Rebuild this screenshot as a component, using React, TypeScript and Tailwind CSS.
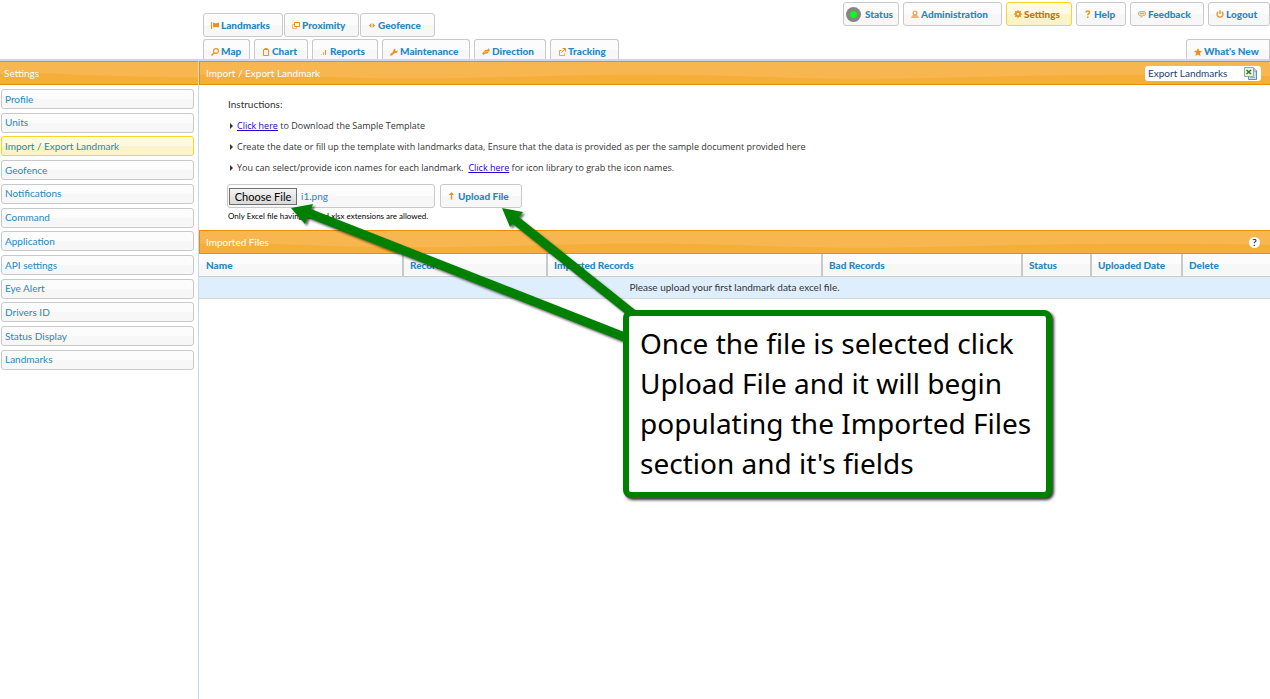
import { useRef, type ReactNode } from 'react';

type Tab = { label: string; icon: ReactNode; width: string; active?: boolean };

const O = '#ee8f1c';

const svg = (children: ReactNode) => (
  <svg width="8" height="8" viewBox="0 0 8 8" className="shrink-0" aria-hidden="true">
    {children}
  </svg>
);

const icons = {
  flag: svg(
    <>
      <path d="M0.5 1v7" stroke={O} fill="none" />
      <path d="M2 2c1.500-.8 2 .8 3.200.3L8 1.500V6c-1.500.8-2.200-.4-3.200 0L2 6.500z" fill={O} />
    </>,
  ),
  proximity: svg(
    <>
      <path d="M2.500 1.500h5v4h-5z" fill="none" stroke={O} />
      <path d="M2 3.500H.5v4h4V6" fill="none" stroke="#f5b672" />
    </>,
  ),
  geofence: svg(<path d="M3.300 2v5L1 4.500zM4.700 2v5L7 4.500z" fill={O} />),
  search: svg(
    <>
      <circle cx="5" cy="3" r="2.400" fill="none" stroke={O} strokeWidth="1.100" />
      <path d="M3.200 4.800.5 7.500" stroke={O} strokeWidth="1.500" />
    </>,
  ),
  clipboard: svg(
    <>
      <path d="M1.500 1.500h5v6h-5z" fill="none" stroke={O} />
      <path d="M2.500 0h3v2h-3z" fill={O} />
    </>,
  ),
  bars: svg(
    <>
      <path d="M1.500 7V6" stroke="#f5c08a" />
      <path d="M3.500 7V4" stroke="#f5a95a" />
      <path d="M5.500 7V2" stroke={O} />
    </>,
  ),
  wrench: svg(
    <path d="M.3 7.700.2 6.300 3.300 3.500C3 2 4 .7 5.700.6L5 2.200l1 1 1.700-.7C7.800 4.300 6.300 5.300 4.700 5L1.700 7.600z" fill={O} />,
  ),
  direction: svg(
    <path d="M2.500 2.200 6 1.400V0l2 2.300-2 2V3.200L2.500 4zM6 5.200 2.200 6v1.500L0 5.300l2.200-2v1.200L6 3.600z" fill={O} />,
  ),
  external: svg(
    <>
      <path d="M3.500 2.500h-2v5h5v-2" fill="none" stroke="#f0a050" />
      <path d="M4.500.5h3v3M7.300.7 3.500 4.500" fill="none" stroke={O} />
    </>,
  ),
  person: svg(
    <>
      <circle cx="4" cy="3" r="1.900" fill="none" stroke="#f2a552" strokeWidth="1.200" />
      <path d="M.5 7.500 1.800 5.500h4.400l1.300 2z" fill="#f6b878" stroke="#f2a552" strokeWidth=".8" />
    </>,
  ),
  gear: svg(
    <>
      <circle cx="4" cy="4" r="2.100" fill="none" stroke={O} strokeWidth="1.600" />
      <path d="M4 .2v1.600M4 6.200v1.600M.2 4h1.600M6.200 4h1.600M1.300 1.300l1 1M5.700 5.700l1 1M1.300 6.700l1-1M5.700 2.300l1-1" stroke={O} strokeWidth="1.400" />
    </>,
  ),
  help: svg(
    <path d="M2 2.500C2 .6 5.500.6 5.500 2.500 5.500 3.700 3.800 3.700 3.800 5.200M3.800 6.500V8" fill="none" stroke={O} strokeWidth="1.500" />,
  ),
  comment: svg(
    <>
      <path d="M1.500 1.500h5l1 1v2l-1 1H5L3 7.500v-2H1.500l-1-1v-2z" fill="#fbdcb8" stroke="#f2a552" />
      <path d="M2 3.500h4" stroke={O} strokeWidth=".8" />
    </>,
  ),
  power: svg(
    <>
      <path d="M2.300 1.700a3 3 0 1 0 3.400 0" fill="none" stroke={O} strokeWidth="1.300" />
      <path d="M4 .2v3.800" stroke={O} strokeWidth="1.300" />
    </>,
  ),
  star: svg(<path d="m4 0 1.200 2.700 2.800.3-2.100 1.900L6.500 8 4 6.400 1.500 8l.6-3.100L0 3l2.800-.3z" fill={O} />),
  up: svg(<path d="M3.500 0 6 3H4.200v4.500H2.800V3H1z" fill={O} />),
};

const topTabs: Tab[] = [
  { label: 'Landmarks', icon: icons.flag, width: 'w-20' },
  { label: 'Proximity', icon: icons.proximity, width: 'w-[75px]' },
  { label: 'Geofence', icon: icons.geofence, width: 'w-[75px]' },
];

const mainTabs: Tab[] = [
  { label: 'Map', icon: icons.search, width: 'w-[47px]' },
  { label: 'Chart', icon: icons.clipboard, width: 'w-[54px]' },
  { label: 'Reports', icon: icons.bars, width: 'w-[66px]' },
  { label: 'Maintenance', icon: icons.wrench, width: 'w-[88px]' },
  { label: 'Direction', icon: icons.direction, width: 'w-[72px]' },
  { label: 'Tracking', icon: icons.external, width: 'w-[69px]' },
];

const userTabs: Tab[] = [
  { label: 'Administration', icon: icons.person, width: 'w-[99px]' },
  { label: 'Settings', icon: icons.gear, width: 'w-[66px]', active: true },
  { label: 'Help', icon: icons.help, width: 'w-[50px]' },
  { label: 'Feedback', icon: icons.comment, width: 'w-[74px]' },
  { label: 'Logout', icon: icons.power, width: 'w-[62px]' },
];

const settings = [
  'Profile',
  'Units',
  'Import / Export Landmark',
  'Geofence',
  'Notifications',
  'Command',
  'Application',
  'API settings',
  'Eye Alert',
  'Drivers ID',
  'Status Display',
  'Landmarks',
];

const columns = [
  { label: 'Name', width: 'w-[204px]' },
  { label: 'Records', width: 'w-36' },
  { label: 'Imported Records', width: 'w-[275px]' },
  { label: 'Bad Records', width: 'w-[200px]' },
  { label: 'Status', width: 'w-[69px]' },
  { label: 'Uploaded Date', width: 'w-[91px]' },
  { label: 'Delete', width: 'w-auto' },
];

const idle = 'border-[#c9c9c9] bg-linear-to-b from-[#fcfcfc] from-50% to-[#f7f7f7] to-50% text-[#2788c0]';
const picked = 'border-[#fad42e] bg-linear-to-b from-[#fdf9e3] from-50% to-[#fbf4c8] to-50%';

function TabLink({ tab, shape }: { tab: Tab; shape: string }) {
  return (
    <a
      href="#"
      className={`flex items-center gap-0.5 border pl-[7px] text-[10px] font-black whitespace-nowrap ${shape} ${tab.width} ${
        tab.active ? `${picked} text-[#c77405]` : idle
      }`}
    >
      {tab.icon}
      {tab.label}
    </a>
  );
}

function Bar({ title, children }: { title: string; children?: ReactNode }) {
  return (
    <div className="relative flex h-6 items-center justify-between border border-r-0 border-[#e78f08] bg-[#f5ae38] px-1.5 text-[10px] text-white">
      <svg viewBox="0 0 1000 22" preserveAspectRatio="xMinYMin slice" className="absolute inset-0 size-full" aria-hidden="true">
        <path d="M0 0h1000v13C880 11 800 12 680 15S480 10 380 12 200 17 120 14 40 11 0 12z" fill="#f7b64f" />
      </svg>
      <h2 className="relative">{title}</h2>
      {children}
    </div>
  );
}

function Bullet({ children }: { children: ReactNode }) {
  return (
    <li className="flex h-[21px] items-center gap-1">
      <svg width="3" height="6" viewBox="0 0 3 6" className="shrink-0" aria-hidden="true">
        <path d="M0 0l3 3-3 3z" fill="#333" />
      </svg>
      <span className="whitespace-pre">{children}</span>
    </li>
  );
}

function ExcelIcon() {
  return (
    <svg width="13" height="13" viewBox="0 0 13 13" aria-hidden="true">
      <path d="M4.500 1.500h6l2 2v9h-8z" fill="#cfdcf3" stroke="#6d86b8" />
      <path d="M10 1v3h3" fill="#eef3fb" stroke="#6d86b8" strokeWidth=".8" />
      <path d="M.5.500h9v9h-9z" fill="#e6f2e2" stroke="#8fb18c" />
      <path d="M2.500 3l4.500 4M7 3l-4.500 4" stroke="#2d7a2c" strokeWidth="1.500" />
      <path d="M6 10.500h5" stroke="#8fa7d3" strokeWidth=".8" />
    </svg>
  );
}

export default function App() {
  const fileInput = useRef<HTMLInputElement>(null);

  return (
    <div className="relative flex min-h-screen flex-col overflow-hidden bg-white font-[Lato,'Liberation_Sans',sans-serif] text-[10px] text-[#333]">
      <header className="flex h-[61px] justify-between border-b-2 border-[#c5dbec] pl-[203px]">
        <nav aria-label="Modules" className="flex flex-col justify-end gap-0.5">
          <div className="flex gap-px">
            {topTabs.map((t) => (
              <TabLink key={t.label} tab={t} shape="h-6 rounded-[3px]" />
            ))}
          </div>
          <div className="flex gap-1">
            {mainTabs.map((t) => (
              <TabLink key={t.label} tab={t} shape="h-5 rounded-t-[3px] border-b-0 pt-1" />
            ))}
          </div>
        </nav>
        <nav aria-label="Account" className="flex flex-col items-end justify-between pt-0.5">
          <div className="flex gap-1">
            <a
              href="#"
              className={`flex h-6 w-14 items-center gap-1 rounded-[3px] border pl-0.5 text-[10px] font-black ${idle}`}
            >
              <span className="flex size-[15px] items-center justify-center rounded-full bg-[#858585]">
                <span className="size-[7px] rounded-full bg-[#0bfa1b]" />
              </span>
              Status
            </a>
            {userTabs.map((t) => (
              <TabLink key={t.label} tab={t} shape="h-6 rounded-[3px]" />
            ))}
          </div>
          <TabLink
            tab={{ label: "What's New", icon: icons.star, width: 'w-[84px]' }}
            shape="h-5 rounded-tl-[3px] border-b-0 pt-1"
          />
        </nav>
      </header>

      <div className="flex flex-1">
        <aside className="w-[199px] shrink-0 border-r border-[#c5dbec]">
          <div className="-ml-[3px]">
            <Bar title="Settings" />
          </div>
          <nav aria-label="Settings" className="mt-1 mr-1 ml-px flex h-[281px] flex-col justify-between">
            {settings.map((s, i) => (
              <a
                key={s}
                href="#"
                className={`flex h-5 items-center rounded-[3px] border px-[3px] text-[#2788c0] ${i === 2 ? picked : idle}`}
              >
                {s}
              </a>
            ))}
          </nav>
        </aside>

        <main className="min-w-0 flex-1">
          <Bar title="Import / Export Landmark">
            <button
              type="button"
              className="relative mr-[3px] flex h-[15px] w-[116px] items-center justify-between rounded-[3px] bg-white pr-1 pl-[3px] text-[#1d3f72]"
            >
              Export Landmarks
              <ExcelIcon />
            </button>
          </Bar>

          <section className="h-[145px] pt-[9px] pl-7">
            <p className="flex h-[21px] items-center pl-px">Instructions:</p>
            <ul className="pl-[3px] font-['Open_Sans',sans-serif] text-[9px]">
              <Bullet>
                <a href="#" className="text-[#2a00d0] underline">Click here</a> to Download the Sample Template
              </Bullet>
              <Bullet>
                Create the date or fill up the template with landmarks data, Ensure that the data is provided as per the
                sample document provided here
              </Bullet>
              <Bullet>
                {'You can select/provide icon names for each landmark.  '}
                <a href="#" className="text-[#2a00d0] underline">Click here</a> for icon library to grab the icon names.
              </Bullet>
            </ul>
            <div className="mt-1.5 flex gap-[5px]">
              <div className={`flex h-6 w-[208px] items-center gap-1 rounded-[3px] border px-px ${idle}`}>
                <input ref={fileInput} type="file" className="hidden" aria-label="Landmark file" />
                <button
                  type="button"
                  onClick={() => fileInput.current?.click()}
                  className="h-[17px] w-[68px] border border-[#707070] bg-linear-to-b from-[#f4f4f4] to-[#d8d8d8] text-[11px] leading-none text-black"
                >
                  Choose File
                </button>
                <span>i1.png</span>
              </div>
              <button
                type="button"
                className={`flex h-6 w-[82px] items-center gap-0.5 rounded-[3px] border pl-[7px] font-black ${idle}`}
              >
                {icons.up}
                Upload File
              </button>
            </div>
            <p className="mt-0.5 pl-px text-[8px] leading-3 text-black">
              Only Excel file having xls and xlsx extensions are allowed.
            </p>
          </section>

          <Bar title="Imported Files">
            <button type="button" aria-label="Help" className="relative mr-1 size-[11px] rounded-full bg-white leading-[11px] text-black">
              ?
            </button>
          </Bar>
          <table className="w-full table-fixed border-collapse">
            <thead>
              <tr className="h-[22px] border-b border-[#c9c9c9] bg-linear-to-b from-[#fcfcfc] from-50% to-[#f7f7f7] to-50% text-[#2788c0]">
                {columns.map((c) => (
                  <th
                    key={c.label}
                    scope="col"
                    className={`border-r-2 border-[#c9c9c9] px-1.5 pt-px text-left font-black whitespace-nowrap first:pl-[7px] last:border-r-0 ${c.width}`}
                  >
                    {c.label}
                  </th>
                ))}
              </tr>
            </thead>
            <tbody>
              <tr className="h-[22px] border-b border-[#d8d8d8] bg-[#dfeefd]">
                <td colSpan={7} className="text-center">
                  Please upload your first landmark data excel file.
                </td>
              </tr>
            </tbody>
          </table>
        </main>
      </div>

      <svg
        width="660"
        height="360"
        viewBox="0 0 660 360"
        className="pointer-events-none absolute top-0 left-0 drop-shadow-[2px_2px_1px_rgba(0,0,0,0.6)]"
        aria-hidden="true"
      >
        <path d="M306 212 632 340M514 219l124 99" stroke="#008000" strokeWidth="9" />
        <path d="M291 208l22-4-8 20zM502 208l21 4-13 15z" fill="#008000" />
      </svg>
      <p className="absolute top-[310px] left-[623px] w-[429px] rounded-lg border-6 border-[#008000] bg-white px-[11px] pt-[7px] pb-[9px] font-['Noto_Sans',sans-serif] text-[28px] leading-10 whitespace-nowrap text-black shadow-[2px_2px_3px_rgba(0,0,0,0.8)]">
        Once the file is selected click
        <br />
        Upload File and it will begin
        <br />
        populating the Imported Files
        <br />
        section and it's fields
      </p>
    </div>
  );
}
